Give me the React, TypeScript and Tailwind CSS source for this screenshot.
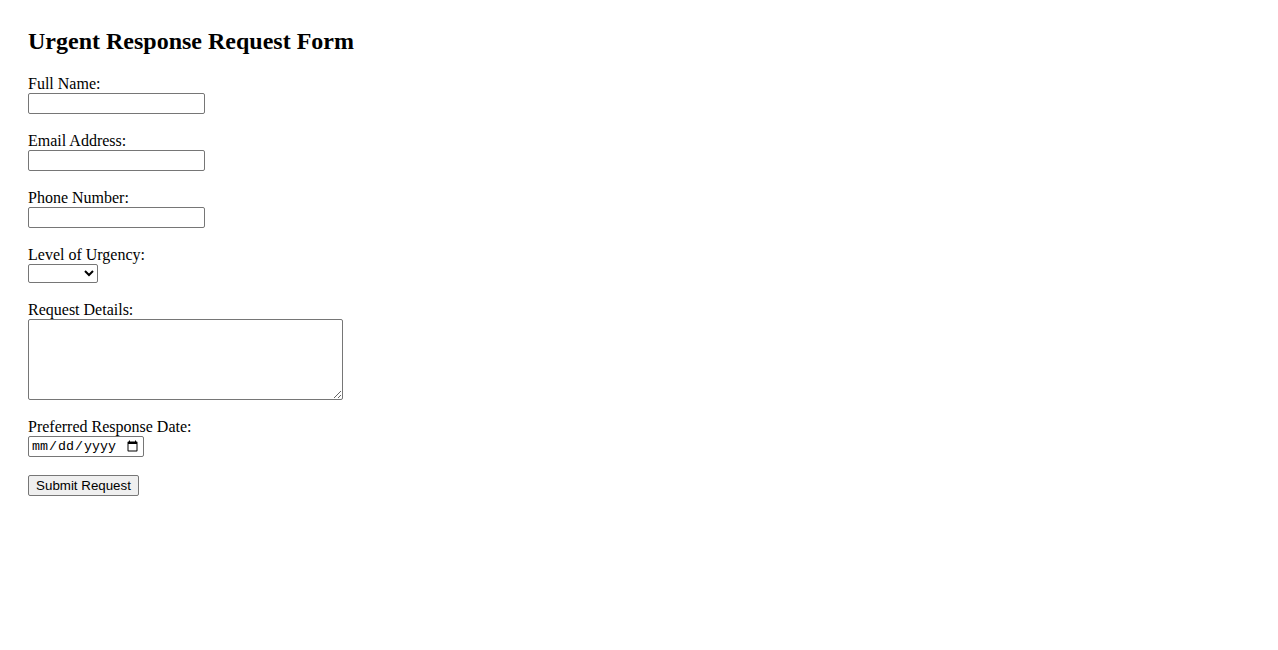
import React from 'react'

const serif = { fontFamily: '"Liberation Serif", "Times New Roman", serif' }

const fieldClass = 'block mb-[18px]'
const labelClass = 'block leading-[18px] text-[16px] text-black'
const inputClass =
  'block h-[21px] w-[177px] border border-[#767676] rounded-[2px] bg-white px-[2px] text-[13.33px] font-["Liberation_Sans",Arial,sans-serif]'

export default function App() {
  return (
    <div className="min-h-screen bg-white pl-7 pt-[27px] text-black" style={serif}>
      <h2 className="text-[24px] font-bold leading-[28px] mb-[20px]">Urgent Response Request Form</h2>

      <form onSubmit={(e) => e.preventDefault()}>
        <div className={fieldClass}>
          <label htmlFor="name" className={labelClass}>Full Name:</label>
          <input id="name" type="text" className={inputClass} />
        </div>

        <div className={fieldClass}>
          <label htmlFor="email" className={labelClass}>Email Address:</label>
          <input id="email" type="email" className={inputClass} />
        </div>

        <div className={fieldClass}>
          <label htmlFor="phone" className={labelClass}>Phone Number:</label>
          <input id="phone" type="tel" className={inputClass} />
        </div>

        <div className={fieldClass}>
          <label htmlFor="urgency" className={labelClass}>Level of Urgency:</label>
          <select
            id="urgency"
            className="block h-[19px] w-[70px] border border-[#767676] rounded-[2px] bg-white text-[13.33px] font-['Liberation_Sans',Arial,sans-serif]"
            defaultValue=""
          >
            <option value=""></option>
            <option value="low">Low</option>
            <option value="medium">Medium</option>
            <option value="high">High</option>
          </select>
        </div>

        <div className={fieldClass}>
          <label htmlFor="details" className={labelClass}>Request Details:</label>
          <textarea
            id="details"
            className="block h-[81px] w-[315px] border border-[#767676] rounded-[2px] bg-white p-[2px] text-[13.33px] font-['Liberation_Mono',monospace]"
          />
        </div>

        <div className={fieldClass}>
          <label htmlFor="date" className={labelClass}>Preferred Response Date:</label>
          <input
            id="date"
            type="date"
            className="block h-[21px] w-[116px] border border-[#767676] rounded-[2px] bg-white px-[2px] text-[13.33px] font-['Liberation_Mono',monospace]"
          />
        </div>

        <button
          type="submit"
          className="block h-[21px] w-[111px] border border-[#767676] rounded-[2px] bg-[#efefef] text-[13.33px] leading-none text-black font-['Liberation_Sans',Arial,sans-serif]"
        >
          Submit Request
        </button>
      </form>
    </div>
  )
}
